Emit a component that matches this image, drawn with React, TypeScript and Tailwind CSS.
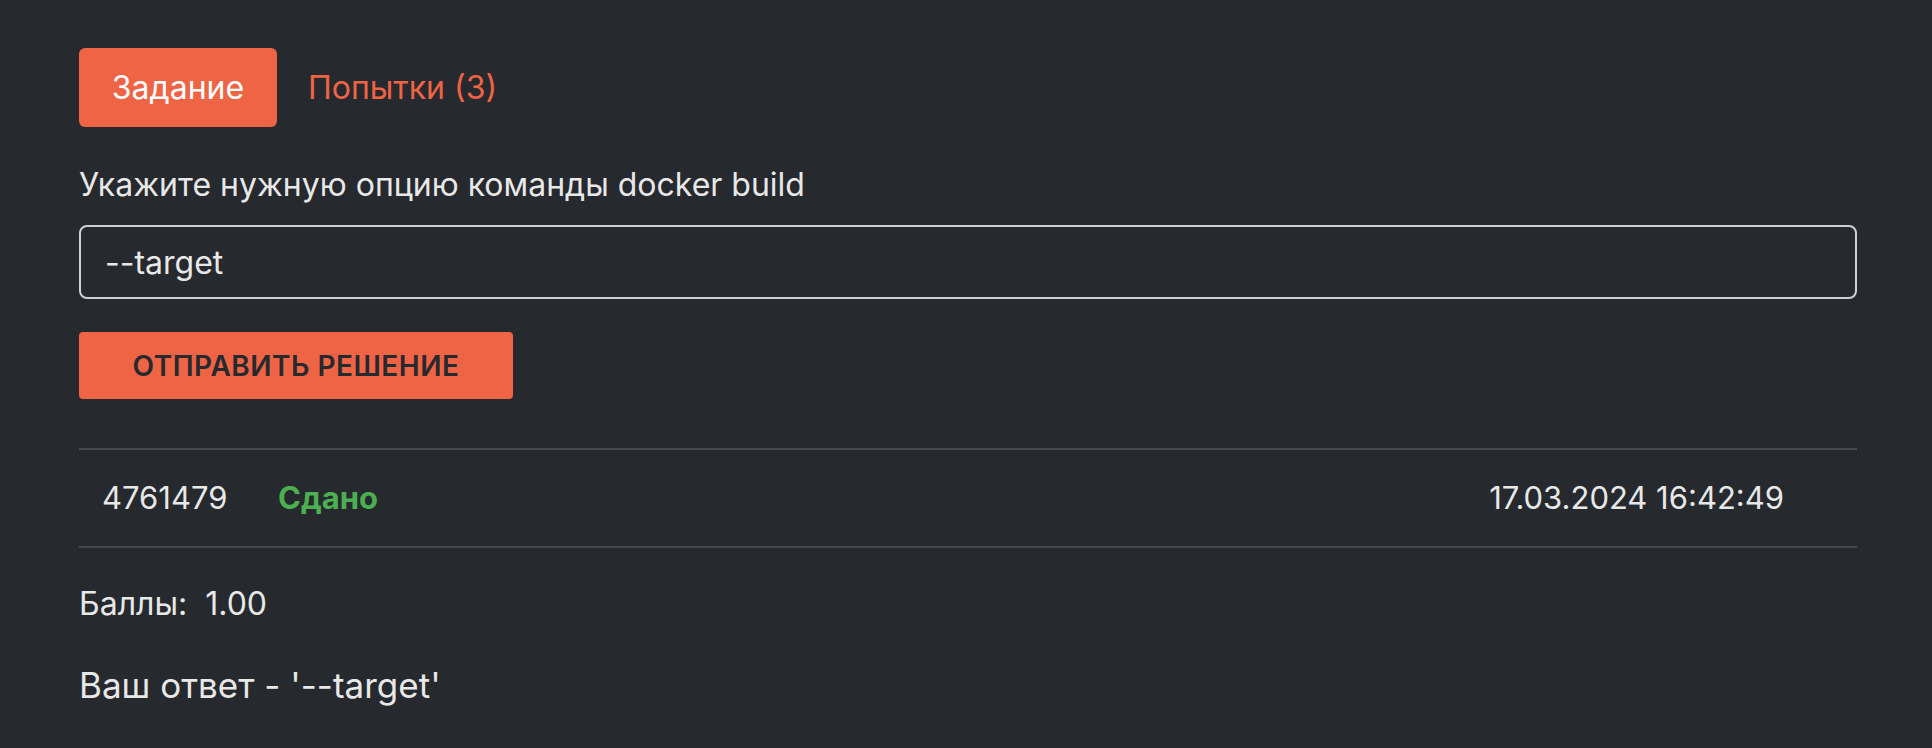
import React from 'react';

const ATTEMPTS = [{ id: 4761479, status: 'Сдано', date: '17.03.2024 16:42:49' }];

export default function App() {
  return (
    <div
      className="min-h-screen bg-[#26292e] pl-[79px] pr-[75px] pt-[48px] text-[#e8e8e8]"
      style={{ fontFamily: 'Inter, "Noto Sans", sans-serif' }}
    >
      {/* Tabs */}
      <div className="flex">
        <button
          type="button"
          className="h-[79px] w-[198px] rounded-[6px] bg-[#ef6445] text-[32px] text-white"
        >
          Задание
        </button>
        <button type="button" className="h-[79px] px-[31px] text-[32px] text-[#ef6445]">
          Попытки (3)
        </button>
      </div>

      {/* Task */}
      <p className="mt-[34px] text-[32px] leading-[48px]">Укажите нужную опцию команды docker build</p>
      <input
        defaultValue="--target"
        className="mt-[16px] block h-[74px] w-full rounded-[8px] border-2 border-[#cfd0d2] bg-transparent px-[24px] text-[32px] text-[#e8e8e8] outline-none"
      />
      <button
        type="button"
        className="mt-[33px] h-[67px] w-[434px] rounded-[4px] bg-[#ef6445] text-[28px] font-semibold uppercase tracking-[0.5px] text-[#26292e]"
      >
        Отправить решение
      </button>

      {/* Attempts list */}
      <div className="mt-[49px] border-y-2 border-[#46494e]">
        {ATTEMPTS.map((a) => (
          <div key={a.id} className="flex h-[96px] items-center pl-[23px] pr-[73px] text-[31px]">
            <span className="w-[176px]">{a.id}</span>
            <span className="font-bold text-[#4caf50]">{a.status}</span>
            <span className="ml-auto">{a.date}</span>
          </div>
        ))}
      </div>

      <p className="mt-[36px] text-[32px] leading-[40px]">Баллы:&nbsp; 1.00</p>
      <p className="mt-[37px] text-[35px] leading-[48px]">Ваш ответ - '--target'</p>
    </div>
  );
}
